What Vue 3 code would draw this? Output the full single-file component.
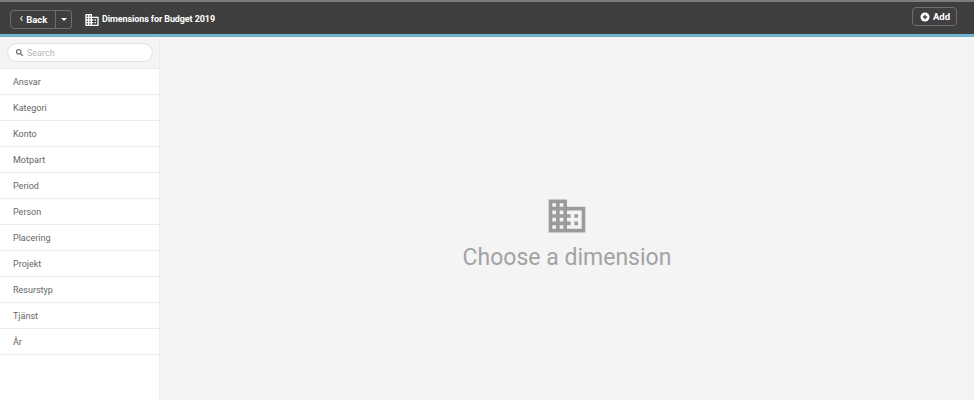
<script setup>
const dimensions = ["Ansvar", "Kategori", "Konto", "Motpart", "Period", "Person", "Placering", "Projekt", "Resurstyp", "Tjänst", "År"]
const domainPath = "M12 7V3H2v18h20V7H12zM6 19H4v-2h2v2zm0-4H4v-2h2v2zm0-4H4V9h2v2zm0-4H4V5h2v2zm4 12H8v-2h2v2zm0-4H8v-2h2v2zm0-4H8V9h2v2zm0-4H8V5h2v2zm10 12h-8v-2h2v-2h-2v-2h2v-2h-2V9h8v10zm-2-8h-2v2h2v-2zm0 4h-2v2h2v-2z"
</script>

<template>
  <div class="page">
    <header class="topbar">
      <div class="btn-group">
        <button class="btn back"><span class="chev">‹</span> Back</button>
        <button class="btn caret-btn"><span class="caret"></span></button>
      </div>
      <svg class="title-icon" viewBox="0 0 24 24"><path :d="domainPath" fill="#fff" /></svg>
      <h1>Dimensions for Budget 2019</h1>
      <button class="btn add">
        <svg viewBox="0 0 12 12" class="plus"><circle cx="6" cy="6" r="4.5" fill="#fff" /><path d="M6 3.8V8.2M3.8 6H8.2" stroke="#3f3f3f" stroke-width="1.3" /></svg>
        Add
      </button>
    </header>
    <div class="body">
      <aside class="sidebar">
        <div class="search-wrap">
          <div class="search">
            <svg viewBox="0 0 12 12" class="search-icon"><circle cx="5" cy="5" r="3" fill="none" stroke="#666" stroke-width="1.5" /><path d="M7.2 7.2L10.5 10.5" stroke="#666" stroke-width="1.7" /></svg>
            <span>Search</span>
          </div>
        </div>
        <ul>
          <li v-for="d in dimensions" :key="d">{{ d }}</li>
        </ul>
      </aside>
      <main class="content">
        <svg class="empty-icon" viewBox="0 0 24 24"><path :d="domainPath" fill="#9b9b9b" /></svg>
        <p>Choose a dimension</p>
      </main>
    </div>
  </div>
</template>

<style scoped>
.page {
  width: 974px;
  height: 400px;
  display: flex;
  flex-direction: column;
  overflow: hidden;
  font-family: Roboto, "Liberation Sans", sans-serif;
}
.topbar {
  height: 37px;
  box-sizing: border-box;
  background: #3f3f3f;
  border-top: 2px solid #7d7d7d;
  border-bottom: 3px solid #6fb3ce;
  display: flex;
  align-items: center;
  padding: 0 17px 0 10px;
  color: #fff;
}
.btn-group {
  display: flex;
  margin-top: 2px;
}
.btn {
  background: transparent;
  color: #fff;
  border: 1px solid #6e6e6e;
  font-family: inherit;
  font-weight: 700;
  font-size: 9.5px;
  padding: 0;
}
.back {
  width: 46px;
  height: 19px;
  border-radius: 4px 0 0 4px;
  padding-left: 1px;
  display: flex;
  align-items: center;
  justify-content: center;
  gap: 3px;
}
.chev {
  font-weight: 400;
  font-size: 12px;
  line-height: 12px;
  margin-top: -2px;
}
.caret-btn {
  width: 16px;
  height: 19px;
  border-left: none;
  border-radius: 0 4px 4px 0;
  display: flex;
  align-items: center;
  justify-content: center;
}
.caret {
  border-left: 3px solid transparent;
  border-right: 3px solid transparent;
  border-top: 3px solid #fff;
}
.title-icon {
  width: 16px;
  height: 16px;
  margin: 3px 0 0 12px;
}
h1 {
  margin: 2px 0 0 2px;
  font-size: 9px;
  font-weight: 700;
  letter-spacing: -0.1px;
}
.add {
  margin-left: auto;
  margin-bottom: 3px;
  width: 45px;
  height: 19px;
  border-radius: 4px;
  display: flex;
  align-items: center;
  justify-content: center;
  gap: 2px;
}
.plus {
  width: 12px;
  height: 12px;
}
.body {
  flex: 1;
  display: flex;
  min-height: 0;
}
.sidebar {
  width: 160px;
  box-sizing: border-box;
  background: #fff;
  border-right: 1px solid #ececec;
}
.search-wrap {
  background: #f4f4f4;
  height: 32px;
  box-sizing: border-box;
  padding: 6px 6px 0 7px;
  border-bottom: 1px solid #ebebeb;
}
.search {
  height: 19px;
  box-sizing: border-box;
  background: #fff;
  border: 1px solid #e2e2e2;
  border-radius: 10px;
  display: flex;
  align-items: center;
  padding-left: 7px;
  gap: 3px;
  font-size: 9px;
  color: #b5b5b5;
}
.search-icon {
  width: 9px;
  height: 9px;
}
ul {
  list-style: none;
  margin: 0;
  padding: 0;
}
li {
  height: 26px;
  box-sizing: border-box;
  border-bottom: 1px solid #ececec;
  padding-left: 13px;
  display: flex;
  align-items: center;
  font-size: 9px;
  color: #666;
}
.content {
  flex: 1;
  background: #f4f4f4;
  display: flex;
  flex-direction: column;
  align-items: center;
  padding-top: 157px;
  box-sizing: border-box;
}
.empty-icon {
  width: 44px;
  height: 44px;
}
p {
  margin: 5px 0 0;
  font-size: 23px;
  color: #a3a3a3;
  line-height: 30px;
}
</style>
